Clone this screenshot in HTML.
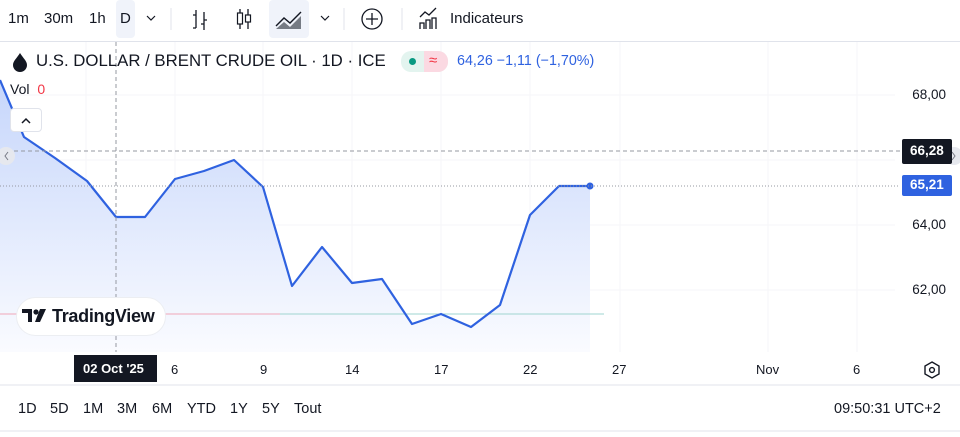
<!DOCTYPE html>
<html><head><meta charset="utf-8"><style>
*{margin:0;padding:0;box-sizing:border-box}
body{width:960px;height:437px;overflow:hidden;background:#fff;font-family:"Liberation Sans",sans-serif;color:#131722;position:relative}
.a{position:absolute;white-space:nowrap}
.tb{font-size:15px;top:10px}
.ax{font-size:13px;color:#131722}
.pl{font-size:13.5px;right:14px}
.bt{font-size:14.5px;top:401px}
</style></head><body>
<div class="a tb" style="left:8px">1m</div>
<div class="a tb" style="left:44px">30m</div>
<div class="a tb" style="left:89px">1h</div>
<div class="a" style="left:116px;top:0;width:19px;height:38px;background:#f0f3fa;border-radius:4px"></div>
<div class="a tb" style="left:120px">D</div>
<svg class="a" style="left:0;top:0" width="960" height="42">
<path d="M147 16l4 4 4-4" fill="none" stroke="#131722" stroke-width="1.2"/>
<line x1="171" y1="8" x2="171" y2="30" stroke="#e0e3eb"/>
<path d="M196 10v18M193 28h3M196 15h-3M204 12v18M204 20h3M204 24h-3" fill="none" stroke="#131722" stroke-width="1.3"/>
<path d="M240 9v20M248 9v20" stroke="#131722" stroke-width="1.3"/>
<rect x="237.5" y="13" width="5" height="11" fill="#fff" stroke="#131722" stroke-width="1.2"/>
<rect x="245.5" y="15" width="5" height="7" fill="#fff" stroke="#131722" stroke-width="1.2"/>
<rect x="269" y="0" width="40" height="38" rx="4" fill="#f0f3fa"/>
<path d="M276 26l8-8 6 5 11-11" fill="none" stroke="#131722" stroke-width="1.4"/>
<path d="M276 29l8-7 6 5 11-11v13z" fill="#131722" opacity=".55"/>
<path d="M321 16l4 4 4-4" fill="none" stroke="#131722" stroke-width="1.2"/>
<line x1="344" y1="8" x2="344" y2="30" stroke="#e0e3eb"/>
<circle cx="372" cy="19" r="10" fill="none" stroke="#131722" stroke-width="1.3"/>
<path d="M372 13v12M366 19h12" stroke="#131722" stroke-width="1.3"/>
<line x1="402" y1="8" x2="402" y2="30" stroke="#e0e3eb"/>
<path d="M420 29v-6h4v6M426 29v-9h4v9M432 29v-11h4v11M420 17l5-5 4 3 7-7" fill="none" stroke="#131722" stroke-width="1.3"/>
</svg>
<div class="a tb" style="left:450px">Indicateurs</div>
<div class="a" style="left:0;top:41px;width:960px;height:1px;background:#e0e3eb"></div>

<svg class="a" style="left:0;top:42px" width="960" height="395">
<defs><linearGradient id="g" x1="0" y1="0" x2="0" y2="1"><stop offset="0" stop-color="#c6d6fb"/><stop offset="1" stop-color="#fafbff"/></linearGradient></defs>
<g stroke="#f5f6f8">
<line x1="175" y1="0" x2="175" y2="310"/><line x1="263" y1="0" x2="263" y2="310"/><line x1="352" y1="0" x2="352" y2="310"/><line x1="441" y1="0" x2="441" y2="310"/><line x1="530" y1="0" x2="530" y2="310"/><line x1="620" y1="0" x2="620" y2="310"/><line x1="768" y1="0" x2="768" y2="310"/><line x1="857" y1="0" x2="857" y2="310"/><line x1="86" y1="0" x2="86" y2="310"/>
<line x1="0" y1="53" x2="895" y2="53"/><line x1="0" y1="118" x2="895" y2="118"/><line x1="0" y1="183" x2="895" y2="183"/><line x1="0" y1="248" x2="895" y2="248"/>
</g>
<path d="M0 38L24 95L55 116L87 139L116 175L145 175L175 137L204 129L234 118L263 145L292 244L322 205L352 241L382 237L412 282L441 272L471 285L500 263L530 173L559 144L590 144V310H0Z" fill="url(#g)"/>
<line x1="0" y1="272" x2="604" y2="272" stroke="#f0a6b8" stroke-width="1"/>
<line x1="280" y1="272" x2="604" y2="272" stroke="#9fd4d0" stroke-width="1"/>
<path d="M0 38L24 95L55 116L87 139L116 175L145 175L175 137L204 129L234 118L263 145L292 244L322 205L352 241L382 237L412 282L441 272L471 285L500 263L530 173L559 144L590 144" fill="none" stroke="#2f62e0" stroke-width="2.2" stroke-linejoin="round"/>
<circle cx="590" cy="144" r="3.5" fill="#2f62e0"/>
<line x1="0" y1="109" x2="900" y2="109" stroke="#9598a1" stroke-dasharray="4,3"/>
<line x1="0" y1="144" x2="900" y2="144" stroke="#9598a1" stroke-dasharray="1,2"/>
<line x1="116" y1="0" x2="116" y2="310" stroke="#9598a1" stroke-dasharray="4,3"/>
<line x1="0" y1="343" x2="960" y2="343" stroke="#e0e3eb"/>
<line x1="0" y1="389" x2="960" y2="389" stroke="#e0e3eb"/>
<circle cx="6" cy="114" r="9" fill="#e6e8ee"/><path d="M8 110l-3 4 3 4" fill="none" stroke="#787b86"/>
<circle cx="954" cy="114" r="9" fill="#e6e8ee"/><path d="M952 110l3 4-3 4" fill="none" stroke="#787b86"/>
<path d="M932 320l7 4v8l-7 4-7-4v-8z" fill="none" stroke="#131722" stroke-width="1.4"/>
<circle cx="932" cy="328" r="2.4" fill="none" stroke="#131722" stroke-width="1.4"/>
</svg>

<svg class="a" style="left:10px;top:52px" width="20" height="20"><path d="M10 1C7 6 3 9 3 13a7 7 0 0014 0c0-4-4-7-7-12z" fill="#131722"/></svg>
<div class="a" style="left:36px;top:51px;font-size:16.8px">U.S. DOLLAR / BRENT CRUDE OIL · 1D · ICE</div>
<div class="a" style="left:401px;top:51px;width:47px;height:21px;border-radius:10px;background:#e3f4ef;overflow:hidden"><div style="position:absolute;left:23px;top:0;width:24px;height:21px;background:#fbd9e2"></div><div style="position:absolute;left:8px;top:7px;width:7px;height:7px;border-radius:50%;background:#089981"></div><div style="position:absolute;left:28px;top:1px;font-size:15px;color:#f23645">≈</div></div>
<div class="a" style="left:457px;top:53px;font-size:14.3px;color:#2f62e0">64,26 −1,11 (−1,70%)</div>
<div class="a" style="left:10px;top:81px;font-size:14px">Vol <span style="color:#f23645;margin-left:4px">0</span></div>
<div class="a" style="left:10px;top:108px;width:32px;height:24px;background:#fff;border:1px solid #e0e3eb;border-radius:4px"><svg width="30" height="22"><path d="M11 14l4-4 4 4" fill="none" stroke="#131722" stroke-width="1.5"/></svg></div>

<div class="a pl" style="top:87px">68,00</div>
<div class="a pl" style="top:217px">64,00</div>
<div class="a pl" style="top:282px">62,00</div>
<div class="a" style="left:902px;top:139px;width:50px;height:25px;background:#131722;color:#fff;font-size:13.5px;font-weight:bold;padding:4px 0 0 8px;border-radius:2px">66,28</div>
<div class="a" style="left:902px;top:175px;width:50px;height:21px;background:#2f62e0;color:#fff;font-size:13.5px;font-weight:bold;padding:2px 0 0 8px;border-radius:2px">65,21</div>

<div class="a" style="left:16px;top:297px;width:150px;height:39px;background:#fff;border:1px solid #eceef2;border-radius:20px"></div>
<svg class="a" style="left:22px;top:308px" width="28" height="16"><path d="M0 1h10v13H6V5H0zM18 1h6l-6 13h-5z" fill="#131722"/><circle cx="14" cy="4" r="2.6" fill="#131722"/></svg>
<div class="a" style="left:52px;top:306px;font-size:18px;font-weight:bold;letter-spacing:-.3px">TradingView</div>

<div class="a" style="left:74px;top:355px;width:83px;height:27px;background:#131722;color:#fff;font-size:13px;font-weight:bold;padding:6px 0 0 9px">02 Oct '25</div>
<div class="a ax" style="left:171px;top:362px">6</div>
<div class="a ax" style="left:260px;top:362px">9</div>
<div class="a ax" style="left:345px;top:362px">14</div>
<div class="a ax" style="left:434px;top:362px">17</div>
<div class="a ax" style="left:523px;top:362px">22</div>
<div class="a ax" style="left:612px;top:362px">27</div>
<div class="a ax" style="left:756px;top:362px">Nov</div>
<div class="a ax" style="left:853px;top:362px">6</div>

<div class="a bt" style="left:18px">1D</div>
<div class="a bt" style="left:50px">5D</div>
<div class="a bt" style="left:83px">1M</div>
<div class="a bt" style="left:117px">3M</div>
<div class="a bt" style="left:152px">6M</div>
<div class="a bt" style="left:187px">YTD</div>
<div class="a bt" style="left:230px">1Y</div>
<div class="a bt" style="left:262px">5Y</div>
<div class="a bt" style="left:294px">Tout</div>
<div class="a bt" style="left:834px">09:50:31 UTC+2</div>
</body></html>
